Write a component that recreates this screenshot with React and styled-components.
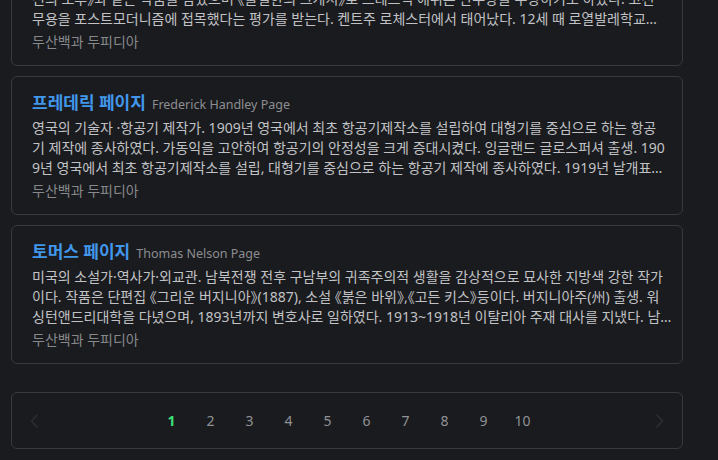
import React, { useLayoutEffect, useRef } from 'react';
import styled, { createGlobalStyle } from 'styled-components';

const Global = createGlobalStyle`
  html, body { margin: 0; padding: 0; background: #1a1b1e; }
  body { font-family: "Noto Sans", "Noto Sans CJK KR", sans-serif; }
  * { box-sizing: border-box; }
`;

const Scroller = styled.div`
  height: 100vh;
  overflow-y: auto;
  scrollbar-width: none;
  &::-webkit-scrollbar { display: none; }
`;

const List = styled.div`
  display: flex;
  flex-direction: column;
  gap: 10px;
  padding: 0 35px 11px 11px;
`;

const Card = styled.article`
  border: 1px solid #373a40;
  border-radius: 6px;
  background: #1a1b1e;
  padding: 14px 6px 13px 20px;
`;

const Title = styled.h3`
  margin: 0;
  height: 24px;
  display: flex;
  align-items: baseline;
  gap: 6px;
  line-height: 24px;
  font-weight: 400;
`;

const TitleKo = styled.span`
  font-size: 17px;
  font-weight: 700;
  color: #4197ec;
`;

const TitleEn = styled.span`
  font-size: 12.5px;
  line-height: 16px;
  color: #8c8e92;
`;

const Snippet = styled.p`
  margin: 3px 0 0;
  font-size: 14px;
  line-height: 20px;
  color: #c1c2c5;
  word-break: break-all;
  font-feature-settings: "halt";
  display: -webkit-box;
  -webkit-box-orient: vertical;
  -webkit-line-clamp: 3;
  overflow: hidden;
`;

const Source = styled.div`
  margin-top: 3px;
  font-size: 14px;
  line-height: 20px;
  color: #86888c;
`;

const Pager = styled.nav`
  margin-top: 18px;
  height: 57px;
  border: 1px solid #373a40;
  border-radius: 6px;
  display: flex;
  align-items: center;
  justify-content: space-between;
  padding: 0 14px;
`;

const Chevron = styled.span`
  width: 16px;
  display: flex;
  justify-content: center;
  align-items: center;
`;

const Pages = styled.div`
  display: flex;
  align-items: center;
`;

const PageNum = styled.span`
  width: 39px;
  text-align: center;
  font-size: 14px;
  line-height: 20px;
  color: ${p => (p.$active ? '#3ee07c' : '#909296')};
  font-weight: ${p => (p.$active ? 700 : 400)};
`;

const results = [
  {
    ko: '애슐리 페이지',
    en: 'Ashley Page',
    lines: [
      '영국의 무용가·안무가. 로열발레단의 수석무용수로 활동하며 독창적인 안무로 주목받았다. 《목',
      '신의 오후》와 같은 작품을 남겼으며 《불멸한의 그게시》로 프레드릭 애쉬튼 안무상을 수상하기도 하였다. 고전',
      '무용을 포스트모더니즘에 접목했다는 평가를 받는다. 켄트주 로체스터에서 태어났다. 12세 때 로열발레학교',
      '에 입학하였다.',
    ],
  },
  {
    ko: '프레데릭 페이지',
    en: 'Frederick Handley Page',
    lines: [
      '영국의 기술자 ·항공기 제작가. 1909년 영국에서 최초 항공기제작소를 설립하여 대형기를 중심으로 하는 항공',
      '기 제작에 종사하였다. 가동익을 고안하여 항공기의 안정성을 크게 증대시켰다. 잉글랜드 글로스퍼셔 출생. 190',
      '9년 영국에서 최초 항공기제작소를 설립, 대형기를 중심으로 하는 항공기 제작에 종사하였다. 1919년 날개표',
      '면에 틈을 두어 실속을 방지하는 장치를 발명하였다.',
    ],
  },
  {
    ko: '토머스 페이지',
    en: 'Thomas Nelson Page',
    lines: [
      '미국의 소설가·역사가·외교관. 남북전쟁 전후 구남부의 귀족주의적 생활을 감상적으로 묘사한 지방색 강한 작가',
      '이다. 작품은 단편집 《그리운 버지니아》(1887), 소설 《붉은 바위》,《고든 키스》등이다. 버지니아주(州) 출생. 워',
      '싱턴앤드리대학을 다녔으며, 1893년까지 변호사로 일하였다. 1913~1918년 이탈리아 주재 대사를 지냈다. 남',
      '부의 전통을 그린 작품을 다수 남겼다.',
    ],
  },
];

const ChevronIcon = ({ dir }) => (
  <svg width="8" height="14" viewBox="0 0 8 14" fill="none">
    <path
      d={dir === 'left' ? 'M7 1 L1.5 7 L7 13' : 'M1 1 L6.5 7 L1 13'}
      stroke="#2c2e33"
      strokeWidth="1.5"
      strokeLinecap="round"
      strokeLinejoin="round"
    />
  </svg>
);

export default function App() {
  const ref = useRef(null);
  useLayoutEffect(() => {
    if (ref.current) ref.current.scrollTop = 73;
  }, []);

  return (
    <>
      <Global />
      <Scroller ref={ref}>
        <List>
          {results.map(r => (
            <Card key={r.en}>
              <Title>
                <TitleKo>{r.ko}</TitleKo>
                <TitleEn>{r.en}</TitleEn>
              </Title>
              <Snippet>
                {r.lines.map((l, i) => (
                  <React.Fragment key={i}>
                    {i > 0 && <br />}
                    {l}
                  </React.Fragment>
                ))}
              </Snippet>
              <Source>두산백과 두피디아</Source>
            </Card>
          ))}
          <Pager>
            <Chevron><ChevronIcon dir="left" /></Chevron>
            <Pages>
              {[1, 2, 3, 4, 5, 6, 7, 8, 9, 10].map(n => (
                <PageNum key={n} $active={n === 1}>{n}</PageNum>
              ))}
            </Pages>
            <Chevron><ChevronIcon dir="right" /></Chevron>
          </Pager>
        </List>
      </Scroller>
    </>
  );
}
